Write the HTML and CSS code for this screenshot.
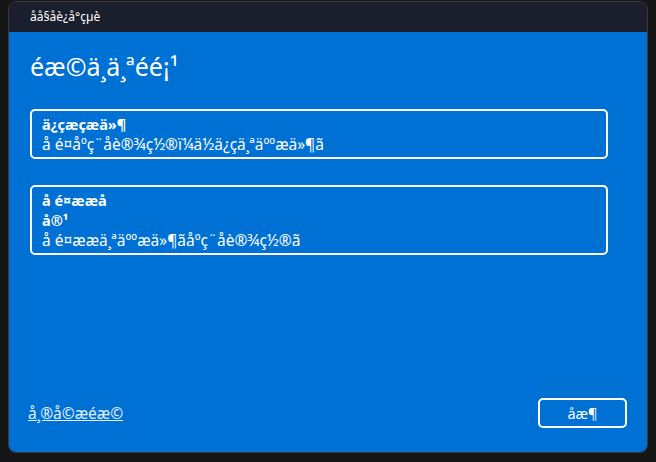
FILE: index.html
```html
<!DOCTYPE html>
<html lang="zh">
<head>
<meta charset="utf-8">
<title>åå§åè¿å°çµè</title>
<link rel="stylesheet" href="styles.css">
</head>
<body>
<div class="desktop">
  <div class="window">
    <div class="titlebar">åå§åè¿å°çµè</div>
    <div class="content">
      <h1 class="heading">éæ©ä¸ä¸ªéé¡¹</h1>
      <div class="options">
        <div class="option">
          <div class="option-title">ä¿çæçæä»¶</div>
          <div class="option-desc">å é¤åºç¨åè®¾ç½®ï¼ä½ä¿çä¸ªäººæä»¶ã</div>
        </div>
        <div class="option">
          <div class="option-title">å é¤ææå<br>å®¹</div>
          <div class="option-desc">å é¤ææä¸ªäººæä»¶ãåºç¨åè®¾ç½®ã</div>
        </div>
      </div>
      <div class="footer">
        <a class="help" href="#">å¸®å©æéæ©</a>
        <button class="cancel">åæ¶</button>
      </div>
    </div>
  </div>
</div>
</body>
</html>
```

FILE: styles.css
```css
html, body {
  margin: 0;
  padding: 0;
}
body {
  width: 656px;
  height: 462px;
  background: #161616;
  font-family: "Noto Sans", "Open Sans", sans-serif;
  overflow: hidden;
}
.desktop {
  padding: 1px 8px 0 8px;
}
.window {
  width: 640px;
  height: 452px;
  box-sizing: border-box;
  border: 1px solid #3a3a3c;
  border-radius: 8px;
  overflow: hidden;
  display: flex;
  flex-direction: column;
}
.titlebar {
  height: 30px;
  flex: none;
  background: #1b1f2d;
  color: #ffffff;
  font-size: 12px;
  line-height: 30px;
  padding-left: 21px;
}
.content {
  flex: 1;
  background: #0071d4;
  display: flex;
  flex-direction: column;
  padding: 0 20px 24px 21px;
  color: #ffffff;
}
.heading {
  margin: 18px 0 0 0;
  font-size: 25px;
  font-weight: 400;
  line-height: 32px;
}
.options {
  margin-top: 27px;
  margin-right: 19px;
  display: flex;
  flex-direction: column;
  gap: 26px;
}
.option {
  border: 2px solid #ffffff;
  border-radius: 5px;
  padding: 3px 10px;
  font-size: 14px;
  line-height: 20px;
}
.option-title {
  font-weight: 700;
  font-size: 14.5px;
}
.option-desc {
  font-size: 15.5px;
}
.footer {
  margin-top: auto;
  display: flex;
  justify-content: space-between;
  align-items: center;
}
.help {
  color: #e3efff;
  font-size: 15.5px;
  margin-left: -2px;
  text-decoration: underline;
}
.cancel {
  width: 89px;
  height: 30px;
  box-sizing: border-box;
  background: transparent;
  border: 2px solid #ffffff;
  border-radius: 5px;
  color: #ffffff;
  font-family: inherit;
  font-size: 14.5px;
  padding: 0;
}
```
